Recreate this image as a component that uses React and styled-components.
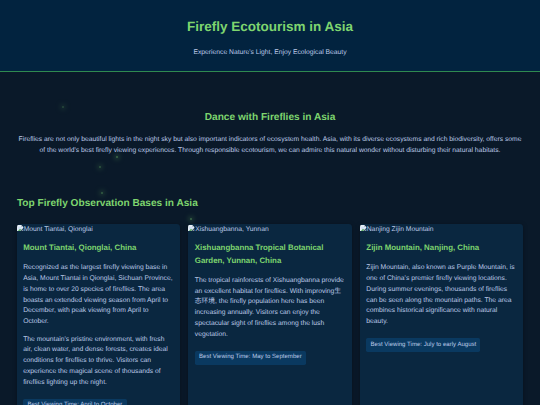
import React from 'react'
import styled, { createGlobalStyle } from 'styled-components'

const GlobalStyle = createGlobalStyle`
html{
    font-size:6.75px;
}
body{
    margin:0;
    background-color:#0a1929;
    color:#bccae8;
    font-family:"Liberation Sans", Arial, "Noto Sans CJK SC", sans-serif;
    font-size:1rem;
    line-height:1.6;
    text-rendering:geometricPrecision;
}
`
const Page = styled.div`
height:100vh;
overflow:hidden;
position:relative;
`
const Header = styled.header`
background-color:#02233f;
border-bottom:1px solid #2f8a50;
padding:6.6px 0 5.7px;
text-align:center;
h1{
    font-size:2rem;
    margin:0.67em 0;
    color:#7ed56f;
}
p{
    margin:10.4px 0 0;
    padding-bottom:1rem;
}
`
const Container = styled.main`
width:506.25px;
margin:0 auto;
`
const Title = styled.h2`
font-size:1.5rem;
margin:0.83em 0;
color:#7ed56f;
`
const Intro = styled.section`
text-align:center;
padding:29.6px 0 24.1px;
h2{
    margin-top:8.4px;
}
p{
    margin:8.9px 0 1rem;
}
`
const Bases = styled.div`
display:grid;
grid-template-columns:repeat(3, 1fr);
gap:8.44px;
margin-top:11.7px;
`
const Card = styled.article`
height:260px;
background-color:#0a2740;
border-radius:3.4px;
overflow:hidden;
box-shadow:0 1.7px 5px rgba(0,0,0,0.3);
`
const Photo = styled.div`
display:flex;
height:10px;
padding-top:0.9px;
svg{
    width:6.75px;
    height:6.75px;
    flex:none;
}
`
const CardContent = styled.div`
padding:7.6px 6.33px;
h3{
    font-size:1.17rem;
    margin:0 0 8.4px;
    color:#7ed56f;
}
p{
    margin:0 0 1rem;
}
`
const BestTime = styled.div`
display:inline-block;
background-color:#0a3960;
border-radius:1.7px;
padding:1.5px 4.22px;
margin-top:3.6px;
font-size:0.9rem;
line-height:10.8px;
`
const Firefly = styled.span`
position:absolute;
left:${(p) => p.$x - 1}px;
top:${(p) => p.$y - 1}px;
width:2px;
height:2px;
border-radius:50%;
background-color:#7ed56f;
box-shadow:0 0 5px 1.5px rgba(126,213,111,0.7);
opacity:${(p) => p.$glow};
pointer-events:none;
`

const fireflies = [
    { x: 62.5, y: 106.8, glow: 0.25 },
    { x: 117.2, y: 157.2, glow: 0.42 },
    { x: 100, y: 167, glow: 0.33 },
    { x: 102.4, y: 193, glow: 0.36 },
    { x: 190.6, y: 218.5, glow: 0.42 },
    { x: 162.5, y: 148.5, glow: 0.12 },
]

const bases = [
    {
        alt: 'Mount Tiantai, Qionglai',
        name: 'Mount Tiantai, Qionglai, China',
        text: [
            'Recognized as the largest firefly viewing base in Asia, Mount Tiantai in Qionglai, Sichuan Province, is home to over 20 species of fireflies. The area boasts an extended viewing season from April to December, with peak viewing from April to October.',
            "The mountain's pristine environment, with fresh air, clean water, and dense forests, creates ideal conditions for fireflies to thrive. Visitors can experience the magical scene of thousands of fireflies lighting up the night.",
        ],
        time: 'April to October',
    },
    {
        alt: 'Xishuangbanna, Yunnan',
        name: 'Xishuangbanna Tropical Botanical Garden, Yunnan, China',
        text: [
            'The tropical rainforests of Xishuangbanna provide an excellent habitat for fireflies. With improving生态环境, the firefly population here has been increasing annually. Visitors can enjoy the spectacular sight of fireflies among the lush vegetation.',
        ],
        time: 'May to September',
    },
    {
        alt: 'Nanjing Zijin Mountain',
        name: 'Zijin Mountain, Nanjing, China',
        text: [
            "Zijin Mountain, also known as Purple Mountain, is one of China's premier firefly viewing locations. During summer evenings, thousands of fireflies can be seen along the mountain paths. The area combines historical significance with natural beauty.",
        ],
        time: 'July to early August',
    },
]

const BrokenImage = () => (
    <svg viewBox="0 0 16 16">
        <path d="M0 0h10l5 5v2L6 16H0z" fill="#e6eef5" />
        <path d="M3 4h8v4l-3 3H3z" fill="#d0dff5" />
        <path d="M2 14l5-5 3 2-4 5H2z" fill="#5fae63" />
        <path d="M10 0l5 5h-5z" fill="#aab4be" />
        <path d="M15 9v6H9z" fill="#8d9aa8" />
    </svg>
)

const App = () => {
    return (
    <>
        <GlobalStyle />
        <Page>
            <Header>
                <h1>Firefly Ecotourism in Asia</h1>
                <p>Experience Nature's Light, Enjoy Ecological Beauty</p>
            </Header>

            <Container>
                <Intro>
                    <Title>Dance with Fireflies in Asia</Title>
                    <p>Fireflies are not only beautiful lights in the night sky but also important indicators of ecosystem health. Asia, with its diverse ecosystems and rich biodiversity, offers some of the world's best firefly viewing experiences. Through responsible ecotourism, we can admire this natural wonder without disturbing their natural habitats.</p>
                </Intro>

                <Title>Top Firefly Observation Bases in Asia</Title>
                <Bases>
                    {
                        bases.map((b) => (
                            <Card key={b.name}>
                                <Photo><BrokenImage />{b.alt}</Photo>
                                <CardContent>
                                    <h3>{b.name}</h3>
                                    {b.text.map((t) => (<p key={t}>{t}</p>))}
                                    <BestTime>Best Viewing Time: {b.time}</BestTime>
                                </CardContent>
                            </Card>
                        ))
                    }
                </Bases>
            </Container>

            {fireflies.map((f) => (<Firefly key={f.x} $x={f.x} $y={f.y} $glow={f.glow} />))}
        </Page>
    </>
  )
}

export default App
